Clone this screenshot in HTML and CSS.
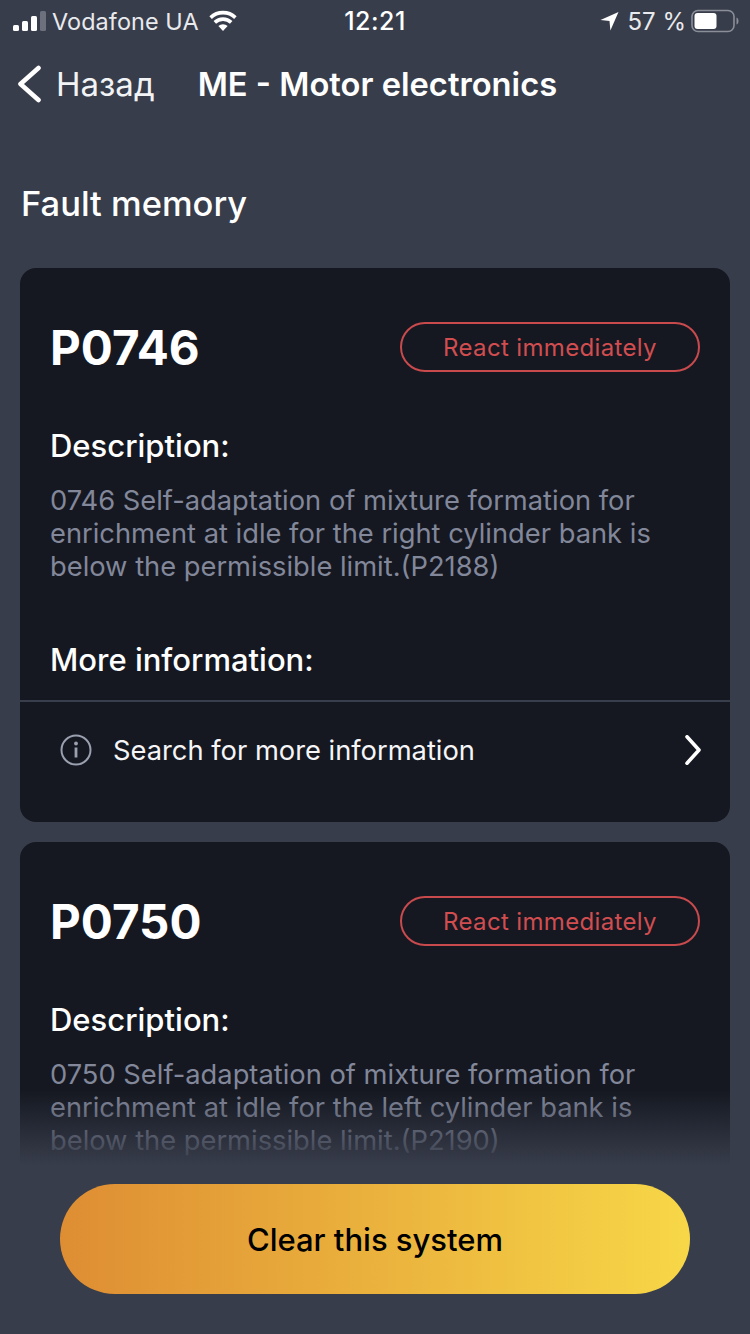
FILE: index.html
```html
<!DOCTYPE html>
<html lang="en">
<head>
<meta charset="utf-8">
<title>Fault memory</title>
<link rel="stylesheet" href="styles.css">
</head>
<body>
<div class="screen">
  <header class="status">
    <div class="status-left">
      <svg class="signal" width="34" height="21" viewBox="0 0 34 21"><rect x="0" y="14" width="6" height="6" rx="1.5" fill="#fff"/><rect x="9" y="10" width="6" height="10" rx="1.5" fill="#fff"/><rect x="18" y="5" width="6" height="15" rx="1.5" fill="#fff"/><rect x="27" y="0" width="6" height="20" rx="1.5" fill="#6d717d"/></svg>
      <span class="carrier">Vodafone UA</span>
      <svg class="wifi" width="30" height="22" viewBox="0 0 30 22"><path d="M15 21l-4.600-5a6.600 6.600 0 0 1 9.200 0z" fill="#fff"/><path d="M6.800 12.400a11.800 11.800 0 0 1 16.400 0M2.600 7.600a18 18 0 0 1 24.800 0" fill="none" stroke="#fff" stroke-width="3.600"/></svg>
    </div>
    <span class="clock">12:21</span>
    <div class="status-right">
      <svg class="loc" width="19" height="20" viewBox="0 0 19 20"><path d="M18.500 1L10.400 19.500 9.500 10 .5 9z" fill="#fff"/></svg>
      <span class="pct">57 %</span>
      <svg class="batt" width="48" height="24" viewBox="0 0 48 24"><rect x="1" y="1.500" width="42" height="21" rx="6" fill="none" stroke="#8a8e98" stroke-width="1.600"/><rect x="3.500" y="4" width="22" height="16" rx="3" fill="#fff"/><path d="M45.500 8.500c1.500.5 2 2 2 3.500s-.5 3-2 3.500z" fill="#8a8e98"/></svg>
    </div>
  </header>

  <nav class="nav">
    <svg class="back" width="24" height="38" viewBox="0 0 24 38"><path d="M21.500 3L3.500 19l18 16" fill="none" stroke="#fff" stroke-width="4.600" stroke-linecap="round" stroke-linejoin="round"/></svg>
    <span class="back-label">Назад</span>
    <span class="nav-title">ME - Motor electronics</span>
  </nav>

  <h1 class="heading">Fault memory</h1>

  <main class="cards">
    <article class="card">
      <div class="card-top">
        <h2 class="code">P0746</h2>
        <span class="badge">React immediately</span>
      </div>
      <h3 class="label label-desc">Description:</h3>
      <p class="desc">0746 Self-adaptation of mixture formation for enrichment at idle for the right cylinder bank is below the permissible limit.(P2188)</p>
      <h3 class="label label-more">More information:</h3>
      <div class="more-row">
        <svg class="info" width="32" height="32" viewBox="0 0 32 32"><circle cx="16" cy="16" r="14.500" fill="none" stroke="#9aa0b0" stroke-width="2"/><rect x="14.600" y="13.500" width="2.800" height="10" fill="#9aa0b0"/><circle cx="16" cy="9.500" r="1.900" fill="#9aa0b0"/></svg>
        <span class="more-text">Search for more information</span>
        <svg class="chev" width="16" height="30" viewBox="0 0 16 30"><path d="M2 1.800L14 15 2 28.200" fill="none" stroke="#fff" stroke-width="3.600" stroke-linecap="round" stroke-linejoin="round"/></svg>
      </div>
    </article>

    <article class="card">
      <div class="card-top">
        <h2 class="code">P0750</h2>
        <span class="badge">React immediately</span>
      </div>
      <h3 class="label label-desc">Description:</h3>
      <p class="desc">0750 Self-adaptation of mixture formation for enrichment at idle for the left cylinder bank is below the permissible limit.(P2190)</p>
    </article>
  </main>

  <footer class="footer">
    <button class="clear" type="button">Clear this system</button>
  </footer>
</div>
</body>
</html>
```
FILE: styles.css
```css
* { box-sizing: border-box; }
html, body { margin: 0; padding: 0; }
body { width: 750px; height: 1334px; overflow: hidden; background: #383d4b; font-family: Inter, "Noto Sans", sans-serif; color: #fff; }
.screen { position: relative; width: 750px; height: 1334px; overflow: hidden; background: #383d4b; }

.status { position: relative; display: flex; justify-content: space-between; align-items: center; height: 42px; padding: 0 11px 0 13px; font-size: 24px; }
.status-left, .status-right { display: flex; align-items: center; }
.carrier { margin-left: 5px; font-size: 23.400px; color: #e9eaed; letter-spacing: 0.1px; }
.wifi { margin-left: 9px; }
.clock { position: absolute; left: 0; right: 0; text-align: center; font-size: 25px; font-weight: 500; letter-spacing: 0.5px; }
.pct { margin: 0 5px 0 9px; color: #e9eaed; }

.nav { display: flex; align-items: center; height: 84px; padding-left: 17px; }
.back-label { margin-left: 15px; font-size: 33px; color: #f2f3f5; }
.nav-title { margin-left: 43px; font-size: 32.700px; font-weight: 600; }

.heading { margin: 0; padding: 58px 0 0 21px; font-size: 34.500px; line-height: 40px; font-weight: 500; }

.cards { display: flex; flex-direction: column; gap: 20px; padding: 44px 20px 0; }
.card { background: #151821; border-radius: 16px; height: 554px; padding: 54px 0 0 30px; flex: none; }
.card-top { display: flex; justify-content: space-between; align-items: center; padding-right: 30px; height: 50px; }
.code { margin: 0; font-size: 47.500px; font-weight: 700; }
.badge { width: 300px; height: 50px; display: flex; align-items: center; justify-content: center; border: 2px solid #c94a4d; border-radius: 25px; color: #d14d50; font-size: 24px; letter-spacing: 0.35px; }
.label { margin: 0; font-size: 31px; line-height: 36px; font-weight: 500; }
.label-desc { margin-top: 56px; }
.desc { margin: 20px 40px 0 0; font-size: 27.300px; line-height: 33px; color: #82879a; }
.label-more { margin-top: 59px; }
.more-row { display: flex; align-items: center; height: 98px; margin: 22px 0 0 -30px; padding: 0 29px 0 40px; border-top: 2px solid #393e4c; }
.more-text { flex: 1; margin-left: 21px; font-size: 27.300px; color: #f5f5f7; }

.footer { position: absolute; left: 0; right: 0; bottom: 0; height: 244px; padding: 94px 60px 0; background: linear-gradient(to bottom, rgba(56,61,75,0) 0, #383d4b 75px); }
.clear { display: block; width: 630px; height: 110px; border: 0; border-radius: 55px; background: linear-gradient(to right, #de8d33, #f7d747); color: #000; font-family: Inter, "Noto Sans", sans-serif; font-size: 31px; font-weight: 500; }
```
